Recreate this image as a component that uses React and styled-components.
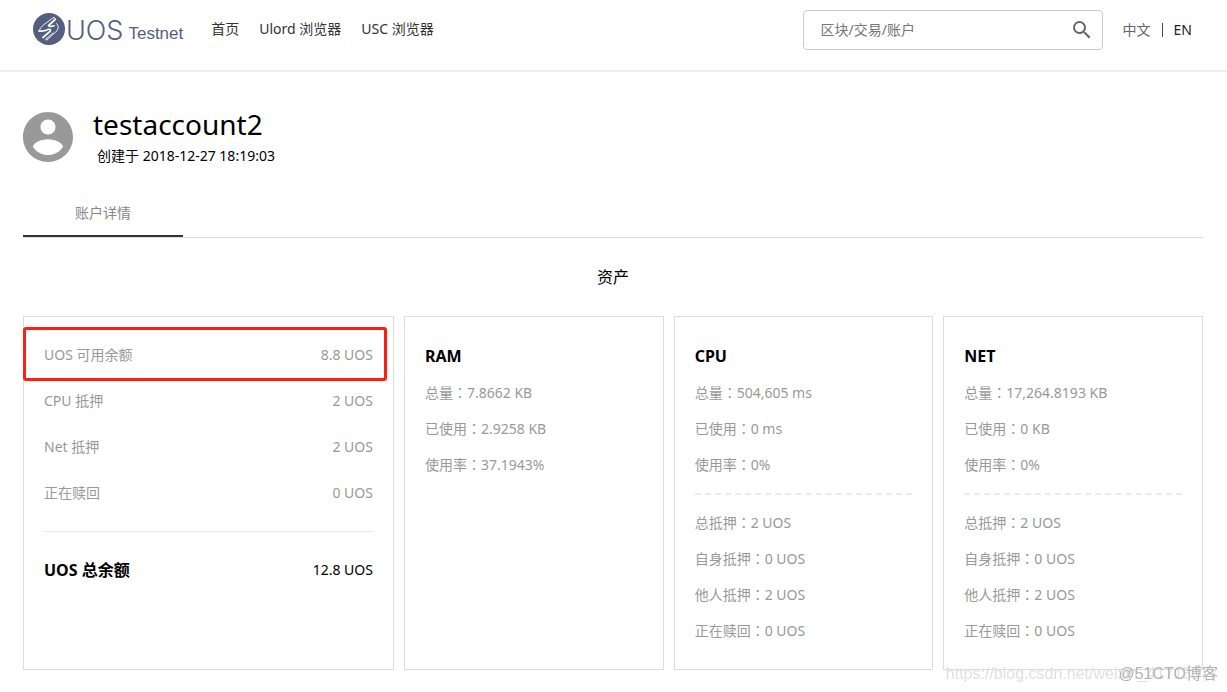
import styled, { createGlobalStyle } from "styled-components";

const GlobalStyle = createGlobalStyle`
    * {
        box-sizing: border-box;
    }
    body {
        margin: 0;
        background: #fff;
        color: #000;
        font-family: "Noto Sans", "Noto Sans CJK SC", sans-serif;
        font-size: 14px;
        line-height: 20px;
    }
`;

const wallet = [
    { label: "UOS 可用余额", value: "8.8 UOS", marked: true },
    { label: "CPU 抵押", value: "2 UOS" },
    { label: "Net 抵押", value: "2 UOS" },
    { label: "正在赎回", value: "0 UOS" },
];

const resources = [
    {
        name: "RAM",
        usage: [["总量", "7.8662 KB"], ["已使用", "2.9258 KB"], ["使用率", "37.1943%"]],
    },
    {
        name: "CPU",
        usage: [["总量", "504,605 ms"], ["已使用", "0 ms"], ["使用率", "0%"]],
        stake: [["总抵押", "2 UOS"], ["自身抵押", "0 UOS"], ["他人抵押", "2 UOS"], ["正在赎回", "0 UOS"]],
    },
    {
        name: "NET",
        usage: [["总量", "17,264.8193 KB"], ["已使用", "0 KB"], ["使用率", "0%"]],
        stake: [["总抵押", "2 UOS"], ["自身抵押", "0 UOS"], ["他人抵押", "2 UOS"], ["正在赎回", "0 UOS"]],
    },
];

function Logo() {
    return (
        <LogoLink href="#">
            <svg width="32" height="32" viewBox="0 0 32 32">
                <circle cx="16" cy="16" r="16" fill="#535e80" />
                <g fill="none" stroke="#fff" strokeLinecap="round" strokeLinejoin="round">
                    <path d="M20.5 4.5L11 11.5Q7 14.5 6 18" strokeWidth="0.9" />
                    <path d="M22.2 6.5L15.5 12.5Q16.5 14 21 12.8" strokeWidth="1.7" />
                    <path d="M20.5 4.5Q22.5 4.2 22.2 6.5" strokeWidth="1" />
                    <path d="M6 18Q11 18.5 15 16.5Q18.5 15.5 17 18.4L10 24.5" strokeWidth="1.7" />
                    <path d="M23.5 10.5Q26.8 13.5 24 17.8L14 26.8" strokeWidth="0.9" />
                    <path d="M20 20L12.5 26.3Q13 27.2 14 26.8" strokeWidth="0.9" />
                </g>
            </svg>
            <LogoName>UOS</LogoName>
            <LogoNet>Testnet</LogoNet>
        </LogoLink>
    );
}

function Rows({ items }) {
    return (
        <List>
            {items.map(([label, value]) => (
                <Row key={label}>
                    <dt>{label}<Colon>：</Colon></dt>
                    <dd>{value}</dd>
                </Row>
            ))}
        </List>
    );
}

export default function App() {
    return (
        <>
        <GlobalStyle />
        <Header>
            <Logo />
            <Nav>
                <a href="#">首页</a>
                <a href="#">Ulord 浏览器</a>
                <a href="#">USC 浏览器</a>
            </Nav>
            <Search>
                <input type="text" aria-label="搜索" placeholder="区块/交易/账户" />
                <button type="button" aria-label="搜索">
                    <svg width="24" height="24" viewBox="0 0 24 24" fill="#666">
                        <path d="M15.5 14h-.79l-.28-.27A6.47 6.47 0 0 0 16 9.5 6.5 6.5 0 1 0 9.5 16c1.61 0 3.09-.59 4.23-1.57l.27.28v.79l5 4.99L20.49 19l-4.99-5zm-6 0C7.01 14 5 11.99 5 9.5S7.01 5 9.5 5 14 7.01 14 9.5 11.99 14 9.5 14z" />
                    </svg>
                </button>
            </Search>
            <Langs>
                <Lang type="button">中文</Lang>
                <Bar />
                <Lang type="button" $active>EN</Lang>
            </Langs>
        </Header>
        <Main>
            <Profile>
                <svg width="50" height="50" viewBox="2 2 20 20" fill="#999">
                    <path d="M12 2C6.48 2 2 6.48 2 12s4.48 10 10 10 10-4.48 10-10S17.52 2 12 2zm0 3c1.66 0 3 1.34 3 3s-1.34 3-3 3-3-1.34-3-3 1.34-3 3-3zm0 14.2c-2.5 0-4.71-1.28-6-3.22.03-1.99 4-3.08 6-3.08 1.99 0 5.97 1.09 6 3.08-1.29 1.94-3.5 3.22-6 3.22z" />
                </svg>
                <div>
                    <Account>testaccount2</Account>
                    <Created>创建于 2018-12-27 18:19:03</Created>
                </div>
            </Profile>
            <Tabs>
                <Tab type="button">账户详情</Tab>
            </Tabs>
            <Title>资产</Title>
            <Cards>
                <WalletCard>
                    <List>
                        {wallet.map((item) => (
                            <WalletRow key={item.label}>
                                <dt>{item.label}</dt>
                                <dd>{item.value}</dd>
                                {item.marked && <Mark />}
                            </WalletRow>
                        ))}
                    </List>
                    <Total>
                        <strong>UOS 总余额</strong>
                        <span>12.8 UOS</span>
                    </Total>
                </WalletCard>
                {resources.map((item) => (
                    <Card key={item.name}>
                        <CardName>{item.name}</CardName>
                        <Rows items={item.usage} />
                        {item.stake && <Dashes />}
                        {item.stake && <Rows items={item.stake} />}
                    </Card>
                ))}
            </Cards>
        </Main>
        <SourceMark>https://blog.csdn.net/weixin_41715077</SourceMark>
        <SiteMark>@51CTO博客</SiteMark>
        </>
    );
}

const Header = styled.header`
    display: flex;
    align-items: flex-start;
    height: 72px;
    padding: 10px 35px 0 33px;
    border-bottom: 2px solid #eee;
`;
const LogoLink = styled.a`
    display: flex;
    align-items: center;
    height: 38px;
    color: #535e80;
    text-decoration: none;
`;
const LogoName = styled.span`
    margin: 4px 0 0 1px;
    font: 300 27px/38px Inter, sans-serif;
`;
const LogoNet = styled.span`
    margin: 10px 0 0 5px;
    font: 17px/20px "Liberation Sans", sans-serif;
`;
const Nav = styled.nav`
    display: flex;
    gap: 20px;
    margin-left: 28px;
    line-height: 38px;

    a {
        color: #333;
        text-decoration: none;
    }
`;
const Search = styled.form`
    display: flex;
    align-items: center;
    width: 300px;
    height: 40px;
    margin-left: auto;
    padding: 0 8px 0 17px;
    border: 1px solid #ccc;
    border-radius: 4px;

    input {
        flex: 1;
        min-width: 0;
        padding: 0;
        border: none;
        outline: none;
        background: none;
        font: inherit;
    }
    input::placeholder {
        color: #757575;
    }
    button {
        display: flex;
        padding: 0;
        border: none;
        background: none;
        cursor: pointer;
    }
`;
const Langs = styled.div`
    display: flex;
    align-items: center;
    gap: 11px;
    height: 40px;
    margin-left: 20px;
`;
const Lang = styled.button`
    padding: 0;
    border: none;
    background: none;
    color: ${({ $active }) => ($active ? "#222" : "#666")};
    font: inherit;
    cursor: pointer;
`;
const Bar = styled.span`
    width: 1px;
    height: 14px;
    background: #5c3a80;
`;
const Main = styled.main`
    padding: 32px 24px 20px 23px;
`;
const Profile = styled.section`
    display: flex;
    gap: 20px;
    padding-top: 8px;
    height: 86px;
`;
const Account = styled.h1`
    margin: -8px 0 2px;
    font-size: 28px;
    font-weight: 400;
    line-height: 40px;
`;
const Created = styled.p`
    margin: 0 0 0 4px;
`;
const Tabs = styled.div`
    display: flex;
    border-bottom: 1px solid #ddd;
`;
const Tab = styled.button`
    width: 160px;
    height: 47px;
    padding: 0;
    border: none;
    border-bottom: 2px solid #333;
    background: none;
    color: #888;
    font: inherit;
    cursor: pointer;
`;
const Title = styled.h2`
    margin: 28px 0;
    font-size: 16px;
    font-weight: 400;
    line-height: 22px;
    text-align: center;
`;
const Cards = styled.div`
    display: grid;
    grid-template-columns: 10fr 7fr 7fr 7fr;
    gap: 10px;
`;
const Card = styled.section`
    padding: 20px;
    border: 1px solid #ddd;
`;
const WalletCard = styled(Card)`
    padding-top: 15px;
`;
const CardName = styled.h3`
    margin: 0;
    font-size: 16px;
    line-height: 38px;
`;
const List = styled.dl`
    margin: 0;
    color: #999;

    dd {
        margin: 0;
    }
`;
const Row = styled.div`
    display: flex;
    line-height: 36px;
`;
const Colon = styled.span`
    font-family: "Noto Sans CJK TC", sans-serif;
    line-height: 1;
`;
const WalletRow = styled.div`
    position: relative;
    display: flex;
    justify-content: space-between;
    line-height: 46px;
`;
/* red frame drawn round a row */
const Mark = styled.div`
    position: absolute;
    inset: -5px -14px -3px -21px;
    border: 3px solid #ff1e10;
    border-radius: 3px;
`;
const Total = styled.div`
    display: flex;
    justify-content: space-between;
    margin-top: 15px;
    padding-top: 15px;
    border-top: 1px solid #e8e8e8;
    line-height: 46px;

    strong {
        font-size: 16px;
    }
`;
const Dashes = styled.hr`
    margin: 10px 0;
    border: none;
    border-top: 2px dashed #ebebeb;
`;
const SourceMark = styled.div`
    position: fixed;
    right: 9px;
    bottom: 8px;
    color: #e0e0e0;
    font: 16px/20px "Liberation Sans", sans-serif;
`;
const SiteMark = styled.div`
    position: fixed;
    right: 9px;
    bottom: 8px;
    color: #b4b4b4;
    font: 16px/20px "Liberation Sans", "Noto Sans CJK SC", sans-serif;
`;
